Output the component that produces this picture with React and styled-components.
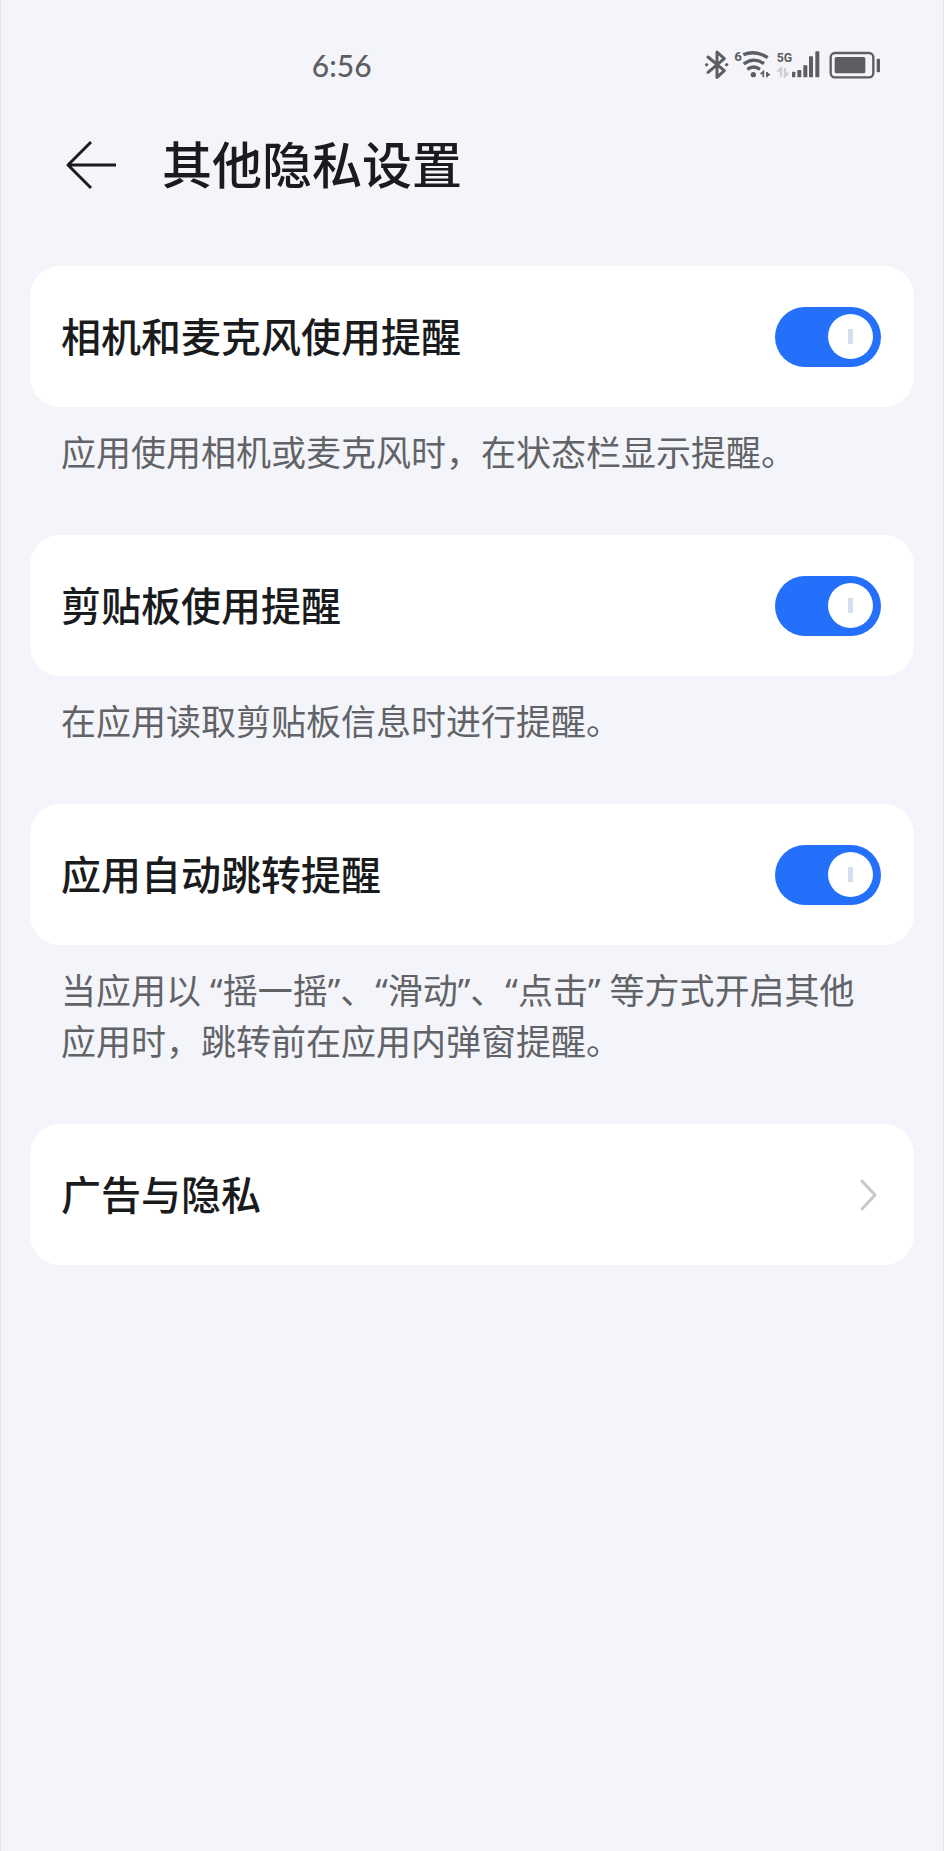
import React, { useState } from 'react';
import styled, { createGlobalStyle } from 'styled-components';

const avisos = [
    {
        id: 'camara',
        titulo: '相机和麦克风使用提醒',
        texto: '应用使用相机或麦克风时，在状态栏显示提醒。',
    },
    {
        id: 'portapapeles',
        titulo: '剪贴板使用提醒',
        texto: '在应用读取剪贴板信息时进行提醒。',
    },
    {
        id: 'salto',
        titulo: '应用自动跳转提醒',
        texto: '当应用以 “摇一摇”、“滑动”、“点击” 等方式开启其他应用时，跳转前在应用内弹窗提醒。',
    },
];

function Bluetooth() {
    return (
        <svg width="25" height="31" viewBox="42 26 75 93" aria-hidden="true">
            <path d="M54 50 L103 91 L81 111 V35 L103 55 L54 96" fill="none" stroke="#5d5e61" strokeWidth="9" strokeLinejoin="round" strokeLinecap="round" />
            <path d="M44 73 L50 67 L56 73 L50 79 Z M104 73 L110 67 L116 73 L110 79 Z" fill="#5d5e61" />
        </svg>
    );
}

function Wifi() {
    return (
        <svg width="37" height="31" viewBox="132 26 111 93" aria-hidden="true">
            <g fill="none" stroke="#5d5e61" strokeWidth="10">
                <path d="M160 43 Q198 28 233 52" />
                <path d="M161 71 Q191 48 222 70" />
                <path d="M172 87 Q191 73 210 87" />
            </g>
            <circle cx="190" cy="103" r="8" fill="#5d5e61" />
            <path d="M212 101 L220 94 V111 M231 95 V111" fill="none" stroke="#5d5e61" strokeWidth="5" />
            <path d="M230 96 L242 103 L230 109 Z" fill="#5d5e61" />
            <text x="133" y="63" fontSize="40" fontWeight="700" fill="#5d5e61">6</text>
        </svg>
    );
}

function Senal() {
    return (
        <svg width="44" height="31" viewBox="258 26 132 93" aria-hidden="true">
            <text x="260" y="64" fontSize="37" fontWeight="700" fill="#5d5e61">5G</text>
            <path d="M263 94 L273 84 V109 M285 83 V107 L295 97" fill="none" stroke="#cfcfd1" strokeWidth="7" />
            <g fill="#5d5e61">
                <rect x="306" y="94" width="10" height="17" rx="2" />
                <rect x="322" y="89" width="12" height="22" rx="2" />
                <rect x="340" y="75" width="12" height="36" rx="2" />
                <rect x="357" y="48" width="12" height="63" rx="2" />
                <rect x="376" y="33" width="12" height="78" rx="2" />
            </g>
        </svg>
    );
}

function Bateria() {
    return (
        <svg width="52" height="31" viewBox="417 26 156 93" aria-hidden="true">
            <rect x="422" y="38" width="128" height="73" rx="13" fill="none" stroke="#5d5e61" strokeWidth="7" />
            <rect x="434" y="50" width="92" height="49" rx="5" fill="#5d5e61" />
            <rect x="560" y="55" width="10" height="41" rx="3" fill="#5d5e61" />
        </svg>
    );
}

function Aviso({ id, titulo, texto }) {
    const [activo, setActivo] = useState(true);

    return (
        <section>
            <Tarjeta>
                <label htmlFor={id}>{titulo}</label>
                <Interruptor
                    id={id}
                    type="checkbox"
                    role="switch"
                    checked={activo}
                    onChange={(e) => setActivo(e.target.checked)}
                />
            </Tarjeta>
            <Descripcion>{texto}</Descripcion>
        </section>
    );
}

function App() {
    return (
        <Pantalla>
            <GlobalStyle />
            <BarraEstado>
                <time>6:56</time>
                <div>
                    <Bluetooth />
                    <Wifi />
                    <Senal />
                    <Bateria />
                </div>
            </BarraEstado>
            <Cabecera>
                <button type="button" aria-label="返回">
                    <svg width="52" height="50" viewBox="0 0 52 50" aria-hidden="true">
                        <path d="M26 2 L3 25 L26 48 M3 25 H51" fill="none" stroke="#1a1b1d" strokeWidth="3" strokeLinejoin="round" />
                    </svg>
                </button>
                <h1>其他隐私设置</h1>
            </Cabecera>
            <Lista>
                {avisos.map((aviso) => (
                    <Aviso key={aviso.id} {...aviso} />
                ))}
                <Enlace href="#privacidad">
                    <span>广告与隐私</span>
                    <svg width="20" height="36" viewBox="0 0 20 36" aria-hidden="true">
                        <path d="M3 4 L16 18 L3 32" fill="none" stroke="#c8c8c9" strokeWidth="3" strokeLinecap="round" strokeLinejoin="round" />
                    </svg>
                </Enlace>
            </Lista>
        </Pantalla>
    );
}

export default App

const GlobalStyle = createGlobalStyle`
    *{
        box-sizing: border-box;
    }
    body{
        margin: 0;
        background-color: #f4f5fa;
        font-family: "Noto Sans CJK SC", sans-serif;
        color: #1a1b1d;
    }
`

const Pantalla = styled.main`
    min-height: 100vh;
    border: 0 solid #e2e3e7;
    border-width: 0 1px;
`

const BarraEstado = styled.div`
    display: flex;
    align-items: center;
    justify-content: space-between;
    height: 129px;
    padding: 0 62px 0 33%;
    font-family: Lato, sans-serif;
    time{
        font-size: 30px;
        line-height: 32px;
        font-weight: 500;
        color: #5d5e61;
    }
    div{
        display: flex;
        gap: 5px;
    }
    svg{
        display: block;
    }
    svg:last-child{
        margin-left: 4px;
    }
    text{
        font-family: Roboto, sans-serif;
    }
`

const Cabecera = styled.header`
    display: flex;
    align-items: center;
    gap: 45px;
    height: 72px;
    padding: 0 64px;
    button{
        display: block;
        padding: 0;
        border: none;
        background: none;
        cursor: pointer;
    }
    svg{
        display: block;
    }
    h1{
        margin: 0;
        padding-bottom: 6px;
        font-size: 50px;
        line-height: 66px;
        font-weight: 500;
    }
`

const Lista = styled.div`
    display: flex;
    flex-direction: column;
    gap: 57px;
    padding: 65px 29px;
`

const Tarjeta = styled.div`
    display: flex;
    align-items: center;
    justify-content: space-between;
    height: 141px;
    padding: 0 33px 0 31px;
    border-radius: 30px;
    background-color: #fff;
    font-size: 40px;
    line-height: 58px;
    font-weight: 500;
    label, span{
        padding-bottom: 4px;
    }
`

const Enlace = styled(Tarjeta).attrs({ as: 'a' })`
    padding-right: 35px;
    color: inherit;
    text-decoration: none;
`

const Interruptor = styled.input`
    appearance: none;
    display: flex;
    align-items: center;
    width: 106px;
    height: 60px;
    margin: 0;
    padding: 0 8px;
    border-radius: 30px;
    background-color: #c9cbd1;
    cursor: pointer;
    &::before{
        content: "";
        width: 45px;
        height: 45px;
        border-radius: 50%;
        background: linear-gradient(#d3deef, #d3deef) center / 5px 15px no-repeat #fff;
    }
    &:checked{
        justify-content: flex-end;
        background-color: #2470fb;
    }
`

const Descripcion = styled.p`
    margin: 0;
    padding: 20px 31px 0;
    font-family: "Noto Sans", "Noto Sans CJK SC", sans-serif;
    font-size: 35px;
    line-height: 51px;
    color: #626367;
`
